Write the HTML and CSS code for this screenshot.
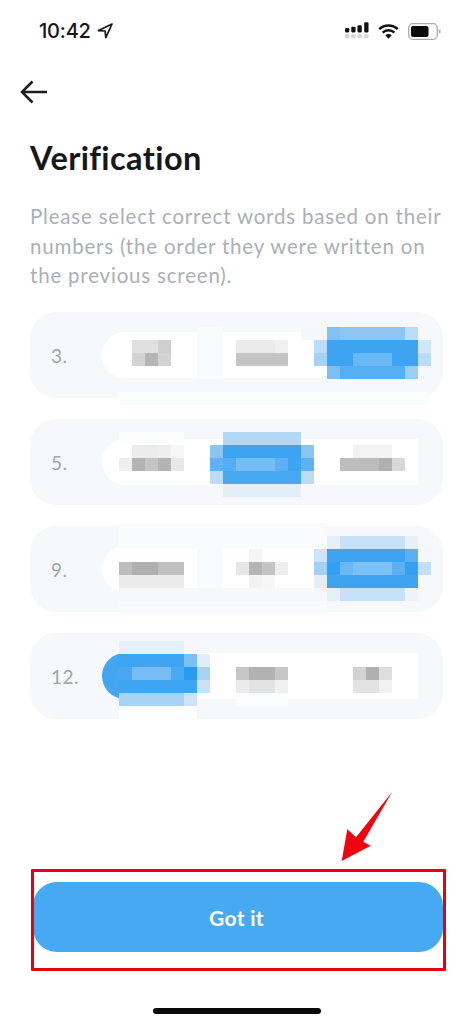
FILE: index.html
```html
<!DOCTYPE html>
<html lang="en">
<head>
<meta charset="utf-8">
<title>Verification</title>
<link rel="stylesheet" href="styles.css">
</head>
<body>
<main class="screen">
  <header class="status">
    <div class="status-left">
      <span class="time">10:42</span>
      <svg class="loc" width="16" height="16" viewBox="0 0 16 16"><path d="M15 1 1.5 7.6l6.6.4.7 6.6z" fill="none" stroke="#1a1a1a" stroke-width="1.7" stroke-linejoin="round"/></svg>
    </div>
    <div class="status-right">
      <svg width="24" height="18" viewBox="0 0 25 18"><g fill="#111"><rect x="0" y="6" width="4.5" height="4.5" rx="1.2"/><rect x="6.5" y="4.5" width="4.5" height="6" rx="1.2"/><rect x="13" y="3" width="4.5" height="7.5" rx="1.2"/><rect x="20" y="0" width="4.5" height="10.5" rx="1.2"/></g><g fill="#d6d6d6"><rect x="0" y="12.500" width="4.500" height="4" rx="1"/><rect x="6.500" y="12.500" width="4.500" height="4" rx="1"/><rect x="13" y="12.500" width="4.500" height="4" rx="1"/><rect x="20" y="12.500" width="4.500" height="4" rx="1"/></g></svg>
      <svg class="wifi" width="21" height="15" viewBox="0 0 21 15"><g fill="none" stroke="#111" stroke-width="2.400"><path d="M1.200 5.200a13.500 13.500 0 0 1 18.600 0"/><path d="M4.600 8.600a8.600 8.600 0 0 1 11.800 0"/></g><path d="M7.300 11.300a4.600 4.600 0 0 1 6.400 0L10.500 14.700z" fill="#111"/></svg>
      <svg class="batt" width="33" height="17" viewBox="0 0 33 17"><rect x="0.700" y="0.700" width="28.600" height="15.600" rx="4" fill="#fff" stroke="#ababab" stroke-width="1.300"/><rect x="3" y="3" width="17.500" height="11" rx="2" fill="#0a0a0a"/><rect x="31" y="6.500" width="1.500" height="4" rx="0.700" fill="#ababab"/></svg>
    </div>
  </header>

  <button class="back" aria-label="Back">
    <svg width="28" height="24" viewBox="0 0 28 24"><path d="M27 12H2M12.500 1.500 2 12l10.500 10.500" fill="none" stroke="#1c1c1e" stroke-width="2.500"/></svg>
  </button>

  <h1 class="title">Verification</h1>
  <p class="intro">Please select correct words based on their numbers (the order they were written on the previous screen).</p>

  <section class="rows">
    <div class="row">
      <span class="num">3.</span>
      <div class="words"><span class="word"></span><span class="word"></span><span class="word"></span></div>
      <svg class="mosaic m1" width="312" height="78" viewBox="0 0 24 6">
        <rect x="6" y="0" width="2" height="4" fill="#fafbfd"/><rect x="14" y="0" width="2" height="1" fill="#f5f8fb"/>
        <rect x="16" y="0" width="1" height="1" fill="#82c1f3"/><rect x="17" y="0" width="5" height="1" fill="#8cc6f5"/><rect x="22" y="0" width="1" height="1" fill="#bcdcf6"/>
        <rect x="1" y="1" width="2" height="1" fill="#e0e0e0"/><rect x="3" y="1" width="1" height="1" fill="#cfcfcf"/><rect x="9" y="1" width="3" height="1" fill="#ebebeb"/><rect x="12" y="1" width="1" height="1" fill="#f0f0f0"/>
        <rect x="15" y="1" width="1" height="1" fill="#bddcf6"/><rect x="16" y="1" width="7" height="1" fill="#3ea4f2"/><rect x="23" y="1" width="1" height="1" fill="#cfe5f8"/>
        <rect x="1" y="2" width="1" height="1" fill="#d3d3d3"/><rect x="2" y="2" width="1" height="1" fill="#b5b5b5"/><rect x="3" y="2" width="1" height="1" fill="#d3d3d3"/><rect x="9" y="2" width="4" height="1" fill="#c4c4c4"/>
        <rect x="15" y="2" width="1" height="1" fill="#a8d1f3"/><rect x="16" y="2" width="2" height="1" fill="#3ea4f2"/><rect x="18" y="2" width="3" height="1" fill="#6ab8f4"/><rect x="21" y="2" width="2" height="1" fill="#3ea4f2"/><rect x="23" y="2" width="1" height="1" fill="#bcdcf6"/>
        <rect x="16" y="3" width="1" height="1" fill="#7fbef2"/><rect x="17" y="3" width="5" height="1" fill="#55aff3"/><rect x="22" y="3" width="1" height="1" fill="#9ccdf5"/>
        <rect x="0" y="5" width="24" height="1" fill="#fbfcfe"/>
      </svg>
    </div>

    <div class="row">
      <span class="num">5.</span>
      <div class="words"><span class="word"></span><span class="word"></span><span class="word"></span></div>
      <svg class="mosaic m2" width="312" height="78" viewBox="0 0 24 6">
        <rect x="0" y="0" width="5" height="1" fill="#fcfdfe"/><rect x="8" y="0" width="6" height="1" fill="#b3d8f5"/>
        <rect x="1" y="1" width="2" height="1" fill="#ececec"/><rect x="3" y="1" width="1" height="1" fill="#eeeeee"/><rect x="4" y="1" width="1" height="1" fill="#f6f6f6"/>
        <rect x="7" y="1" width="1" height="1" fill="#8dc5f2"/><rect x="8" y="1" width="6" height="1" fill="#3ea4f2"/><rect x="14" y="1" width="1" height="1" fill="#8dc5f2"/><rect x="18" y="1" width="3" height="1" fill="#f3f3f3"/>
        <rect x="0" y="2" width="1" height="1" fill="#efefef"/><rect x="1" y="2" width="1" height="1" fill="#b4b4b4"/><rect x="2" y="2" width="1" height="1" fill="#c4c4c4"/><rect x="3" y="2" width="1" height="1" fill="#b4b4b4"/><rect x="4" y="2" width="1" height="1" fill="#e8e8e8"/>
        <rect x="7" y="2" width="1" height="1" fill="#5fb1f3"/><rect x="8" y="2" width="1" height="1" fill="#55adf3"/><rect x="9" y="2" width="3" height="1" fill="#77bdf5"/><rect x="12" y="2" width="1" height="1" fill="#5db0f3"/><rect x="13" y="2" width="1" height="1" fill="#3ea4f2"/><rect x="14" y="2" width="1" height="1" fill="#5fb1f3"/>
        <rect x="17" y="2" width="3" height="1" fill="#bdbdbd"/><rect x="20" y="2" width="1" height="1" fill="#b0b0b0"/><rect x="21" y="2" width="1" height="1" fill="#d8d8d8"/>
        <rect x="7" y="3" width="1" height="1" fill="#bcdcf6"/><rect x="8" y="3" width="6" height="1" fill="#47a8f2"/><rect x="14" y="3" width="1" height="1" fill="#bcdcf6"/>
        <rect x="8" y="4" width="6" height="1" fill="#e3eff8"/>
      </svg>
    </div>

    <div class="row">
      <span class="num">9.</span>
      <div class="words"><span class="word"></span><span class="word"></span><span class="word"></span></div>
      <svg class="mosaic m3" width="312" height="91" viewBox="0 0 24 7">
        <rect x="0" y="0" width="16" height="1" fill="#f9fbfd"/>
        <rect x="0" y="1" width="16" height="1" fill="#f9fbfd"/><rect x="16" y="1" width="1" height="1" fill="#e6f0f9"/><rect x="17" y="1" width="5" height="1" fill="#c6e1f8"/><rect x="22" y="1" width="1" height="1" fill="#e6f0f9"/>
        <rect x="0" y="2" width="6" height="1" fill="#fff"/><rect x="6" y="2" width="2" height="1" fill="#fafbfd"/><rect x="8" y="2" width="7" height="1" fill="#fff"/><rect x="10" y="2" width="1" height="1" fill="#f5f5f5"/>
        <rect x="15" y="2" width="1" height="1" fill="#cfe4f8"/><rect x="16" y="2" width="6" height="1" fill="#3ea4f2"/><rect x="22" y="2" width="1" height="1" fill="#5bb0f2"/><rect x="23" y="2" width="1" height="1" fill="#f5f8fb"/>
        <rect x="0" y="3" width="1" height="1" fill="#bdbdbd"/><rect x="1" y="3" width="2" height="1" fill="#b0b0b0"/><rect x="3" y="3" width="2" height="1" fill="#c0c0c0"/><rect x="6" y="3" width="2" height="1" fill="#fafbfd"/>
        <rect x="9" y="3" width="1" height="1" fill="#e6e6e6"/><rect x="10" y="3" width="1" height="1" fill="#b5b5b5"/><rect x="11" y="3" width="1" height="1" fill="#c4c4c4"/><rect x="12" y="3" width="1" height="1" fill="#eeeeee"/>
        <rect x="15" y="3" width="1" height="1" fill="#a5d0f5"/><rect x="16" y="3" width="1" height="1" fill="#35a0f2"/><rect x="17" y="3" width="1" height="1" fill="#6ab8f4"/><rect x="18" y="3" width="3" height="1" fill="#7cc0f5"/><rect x="21" y="3" width="1" height="1" fill="#5bb0f2"/><rect x="22" y="3" width="1" height="1" fill="#35a0f2"/><rect x="23" y="3" width="1" height="1" fill="#c3def6"/>
        <rect x="0" y="4" width="5" height="1" fill="#ebebeb"/><rect x="6" y="4" width="2" height="1" fill="#fafbfd"/><rect x="10" y="4" width="1" height="1" fill="#f3f3f3"/><rect x="11" y="4" width="1" height="1" fill="#f6f6f6"/>
        <rect x="15" y="4" width="1" height="1" fill="#e2eef8"/><rect x="16" y="4" width="7" height="1" fill="#3ea4f2"/>
        <rect x="0" y="5" width="16" height="1" fill="#f6f8fb"/><rect x="16" y="5" width="1" height="1" fill="#e6f0f9"/><rect x="17" y="5" width="5" height="1" fill="#c6e1f8"/><rect x="22" y="5" width="1" height="1" fill="#edf3f9"/>
        <rect x="0" y="6" width="16" height="1" fill="#f8fafd"/>
      </svg>
    </div>

    <div class="row">
      <span class="num">12.</span>
      <div class="words"><span class="word word-on"></span><span class="word"></span><span class="word"></span></div>
      <svg class="mosaic m4" width="312" height="91" viewBox="0 0 24 7">
        <rect x="0" y="1" width="5" height="1" fill="#e4f0fa"/>
        <rect x="0" y="2" width="5" height="1" fill="#3fa4f1"/><rect x="5" y="2" width="1" height="1" fill="#7cbff4"/><rect x="6" y="2" width="1" height="1" fill="#e1eefa"/>
        <rect x="0" y="3" width="1" height="1" fill="#48a8f2"/><rect x="1" y="3" width="3" height="1" fill="#78bcf5"/><rect x="4" y="3" width="1" height="1" fill="#4ba9f2"/><rect x="5" y="3" width="1" height="1" fill="#2a9cf0"/><rect x="6" y="3" width="1" height="1" fill="#a8d2f5"/>
        <rect x="9" y="3" width="1" height="1" fill="#c6c6c6"/><rect x="10" y="3" width="2" height="1" fill="#b2b2b2"/><rect x="12" y="3" width="1" height="1" fill="#c6c6c6"/><rect x="18" y="3" width="1" height="1" fill="#d2d2d2"/><rect x="19" y="3" width="1" height="1" fill="#b0b0b0"/><rect x="20" y="3" width="1" height="1" fill="#dedede"/>
        <rect x="0" y="4" width="6" height="1" fill="#3fa4f1"/><rect x="6" y="4" width="1" height="1" fill="#cbe1f6"/><rect x="9" y="4" width="1" height="1" fill="#ebebeb"/><rect x="10" y="4" width="2" height="1" fill="#e3e3e3"/><rect x="12" y="4" width="1" height="1" fill="#f0f0f0"/><rect x="18" y="4" width="2" height="1" fill="#e3e3e3"/><rect x="20" y="4" width="1" height="1" fill="#f2f2f2"/>
        <rect x="0" y="5" width="5" height="1" fill="#a8d3f6"/><rect x="5" y="5" width="1" height="1" fill="#cfe4f8"/><rect x="9" y="5" width="4" height="1" fill="#fbfcfe"/>
        <rect x="0" y="6" width="6" height="1" fill="#fdfefe"/>
      </svg>
    </div>
  </section>

  <footer class="actions">
    <button class="cta">Got it</button>
  </footer>
  <div class="home"></div>

  <div class="highlight"></div>
  <svg class="pointer" width="54" height="72" viewBox="0 0 54 72"><path d="M52.300 1.700 23.300 51.700l7.400 4L1.700 71l5.600-31.700L16 47.300z" fill="#ee0510"/></svg>
</main>
</body>
</html>
```
FILE: styles.css
```css
* { box-sizing: border-box; }
html, body { margin: 0; padding: 0; background: #fff; }
.screen {
  position: relative;
  width: 473px;
  height: 1024px;
  display: flex;
  flex-direction: column;
  overflow: hidden;
  font-family: "Lato", "Noto Sans", sans-serif;
}
.status {
  height: 62px;
  padding: 0 32px 0 39px;
  display: flex;
  align-items: center;
  justify-content: space-between;
}
.status-left { display: flex; align-items: center; gap: 6px; }
.time {
  font-family: "Inter", "Liberation Sans", sans-serif;
  font-size: 20px;
  font-weight: 500;
  color: #161616;
  letter-spacing: -0.200px;
}
.status-right { display: flex; align-items: center; gap: 9px; }
.back {
  align-self: flex-start;
  margin: 18px 0 0 20px;
  padding: 0;
  border: 0;
  background: none;
  display: flex;
  height: 24px;
}
.title {
  margin: 35px 0 0 30px;
  font-size: 32.500px;
  line-height: 38px;
  font-weight: 700;
  color: #16181c;
  letter-spacing: 0.400px;
}
.intro {
  margin: 25px 30px 0;
  font-size: 20.500px;
  line-height: 29.500px;
  color: #aab0b8;
  letter-spacing: 0.800px;
}
.rows {
  margin: 21.500px 30px 0;
  display: flex;
  flex-direction: column;
  gap: 21px;
}
.row {
  position: relative;
  height: 86px;
  padding-left: 21px;
  display: flex;
  align-items: center;
  background: #f6f8fb;
  border-radius: 26px;
}
.num {
  width: 51px;
  font-size: 19px;
  color: #a0a6ae;
  letter-spacing: 0.500px;
}
.words {
  width: 316px;
  height: 46px;
  display: flex;
  background: #fff;
  border-radius: 23px 0 0 23px;
  overflow: hidden;
}
.word { flex: 1; }
.word-on { flex: 0 0 40px; background: #44a6ef; }
.mosaic {
  position: absolute;
  left: 88.670px;
  filter: blur(0.400px);
}
.m1 { top: 14.670px; }
.m2 { top: 12.670px; }
.m3 { top: -2.670px; }
.m4 { top: -5px; }
.actions {
  margin: auto 30px 0 33px;
}
.cta {
  display: block;
  width: 100%;
  height: 70px;
  padding: 0 3px 0 0;
  border: 0;
  border-radius: 24px;
  background: #47a9f2;
  color: #fff;
  font-family: inherit;
  font-size: 21px;
  font-weight: 700;
  letter-spacing: 0.300px;
}
.home {
  width: 168px;
  height: 6px;
  margin: 56px auto 10px;
  background: #0a0a0a;
  border-radius: 3px;
}
.highlight {
  position: absolute;
  left: 31px;
  top: 869px;
  width: 415px;
  height: 102px;
  border: 3px solid #e8000f;
  border-radius: 1px;
}
.pointer {
  position: absolute;
  left: 340px;
  top: 790px;
}
```
